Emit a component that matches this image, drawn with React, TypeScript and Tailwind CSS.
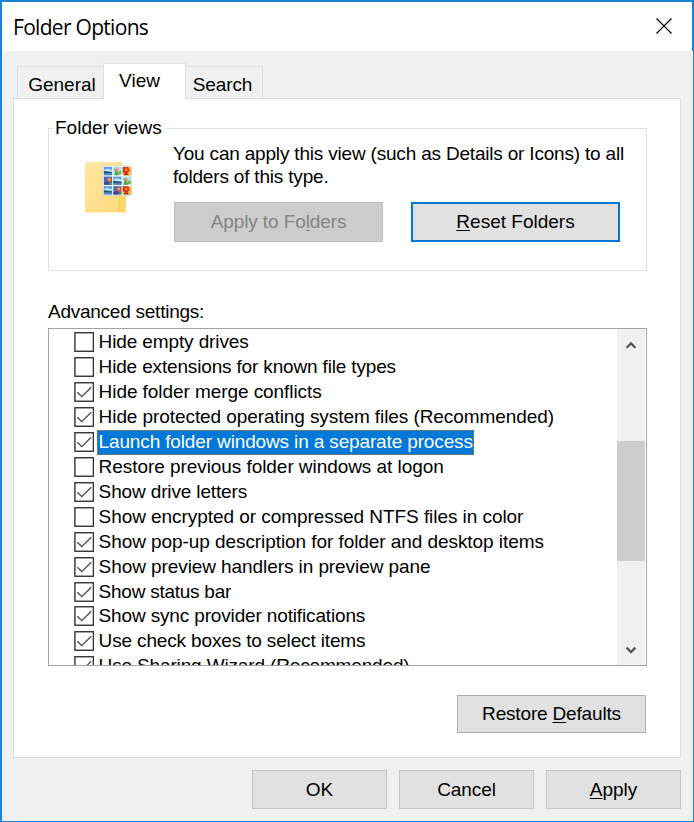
import type { ReactNode } from 'react'

interface Setting { label: string; checked: boolean; selected?: boolean; tracking: string }

const settings: Setting[] = [
  { label: 'Hide empty drives', checked: false, tracking: 'tracking-[-0.12px]' },
  { label: 'Hide extensions for known file types', checked: false, tracking: 'tracking-[-0.16px]' },
  { label: 'Hide folder merge conflicts', checked: true, tracking: 'tracking-[-0.07px]' },
  { label: 'Hide protected operating system files (Recommended)', checked: true, tracking: 'tracking-[-0.08px]' },
  { label: 'Launch folder windows in a separate process', checked: true, selected: true, tracking: 'tracking-[-0.14px]' },
  { label: 'Restore previous folder windows at logon', checked: false, tracking: 'tracking-[-0.06px]' },
  { label: 'Show drive letters', checked: true, tracking: 'tracking-[-0.14px]' },
  { label: 'Show encrypted or compressed NTFS files in color', checked: false, tracking: 'tracking-[-0.06px]' },
  { label: 'Show pop-up description for folder and desktop items', checked: true, tracking: 'tracking-[-0.07px]' },
  { label: 'Show preview handlers in preview pane', checked: true, tracking: 'tracking-[-0.08px]' },
  { label: 'Show status bar', checked: true, tracking: 'tracking-[-0.25px]' },
  { label: 'Show sync provider notifications', checked: true, tracking: 'tracking-[-0.15px]' },
  { label: 'Use check boxes to select items', checked: true, tracking: 'tracking-[-0.15px]' },
  { label: 'Use Sharing Wizard (Recommended)', checked: true, tracking: 'tracking-[-0.15px]' },
]

function Key({ children }: { children: ReactNode }) {
  return <span className="underline decoration-1 underline-offset-2">{children}</span>
}

function Button({ className, children }: { className: string; children: ReactNode }) {
  return (
    <button className={`flex shrink-0 items-center justify-center whitespace-nowrap ${className}`}>
      <span>{children}</span>
    </button>
  )
}

function CheckBox({ checked }: { checked: boolean }) {
  return (
    <svg className="block h-5 w-5 shrink-0" viewBox="0 0 20 20" fill="none">
      <rect x="0.9" y="0.75" width="18.5" height="18.5" fill="#fff" stroke="#333" strokeWidth="1.4" />
      {checked && <path d="M3.3 10.2 7.8 14.6 17.2 5.2" stroke="#4a4a4a" strokeWidth="1.3" />}
    </svg>
  )
}

function SettingRow({ item }: { item: Setting }) {
  return (
    <li className="flex h-[24.92px] items-center">
      <CheckBox checked={item.checked} />
      <span
        className={`ml-[3px] flex h-[25px] items-center whitespace-nowrap border border-dotted pl-[0.6px] ${item.tracking} ${
          item.selected ? 'border-[#c77a2a] bg-[#0078d7] text-white' : 'border-transparent'
        }`}
      >
        {item.label}
      </span>
    </li>
  )
}

/* Thumbnails on the folder: 0 = lake, 1 = butterfly, 2 = flower, 3 = tulip */
const thumbs = [0, 1, 2, 3, 0, 1, 0, 3, 2]

function Thumb({ kind }: { kind: number }) {
  if (kind === 0) {
    return (
      <>
        <rect width="8.2" height="8.2" fill="#5b9be6" />
        <path d="M0 3.2 3 1.6 8.2 3V4.6H0Z" fill="#c5e2fa" />
        <path d="M0 4 3.5 4.6 8.2 5.4V6.6L0 6.4Z" fill="#21546b" />
        <path d="M0 6.4H8.2V8.2H0Z" fill="#4b8bc0" />
      </>
    )
  }
  if (kind === 1) {
    return (
      <>
        <rect width="8.2" height="8.2" fill="#b6dcec" />
        <path d="M0.5 1 3.8 4 5.6 8.2H1L2 5Z" fill="#4da54a" />
        <path d="M2 2.2 4 0.8 5 3.6 3.4 5Z" fill="#ef8c35" />
        <path d="M4.6 5.2 7.6 3.4 8.2 7 5.4 7.6Z" fill="#6eb443" />
      </>
    )
  }
  if (kind === 2) {
    return (
      <>
        <rect width="8.2" height="8.2" fill="#f4b43d" />
        <path d="M0 0H5.6L7 3.8 4 6.6 0 5.4Z" fill="#d7351d" />
        <circle cx="3.6" cy="2.8" r="1.3" fill="#f58b23" />
        <path d="M1 7 4 5.6 6.4 8.2H1Z" fill="#b92c13" />
      </>
    )
  }
  return (
    <>
      <rect width="8.2" height="8.2" fill="#3c6fca" />
      <path d="M2.4 2.8 5 0.6 7.6 2.4 7 6 4.4 5.6Z" fill="#e8471f" />
      <circle cx="5.4" cy="2.8" r="1.3" fill="#f6c332" />
      <path d="M0.6 5.6 4.2 5 5.8 8.2H0Z" fill="#45408f" />
      <path d="M6.4 5.8H8.2V8.2H6Z" fill="#4f9d39" />
    </>
  )
}

function FolderIcon() {
  return (
    <svg className="block h-[52px] w-12" viewBox="0 0 48 52">
      <defs>
        <linearGradient id="folder" x1="0" y1="0" x2="1" y2="1">
          <stop offset="0" stopColor="#ffe9a6" />
          <stop offset="1" stopColor="#fdd978" />
        </linearGradient>
      </defs>
      <path d="M1 1Q1 0 2 0H37L38.3 1.5V33.5H41.7V49.5Q41.7 50.5 40.7 50.5H2Q1 50.5 1 49.5Z" fill="url(#folder)" />
      <path d="M35.3 33.5H41.7V49.5Q41.7 50.5 40.7 50.5H35Z" fill="#ffd869" />
      <path d="M35.2 33.5V50" stroke="#eccb6d" strokeWidth="0.7" />
      <rect x="19" y="4" width="28.6" height="29.4" fill="#f7f8fa" stroke="#d2d2d2" strokeWidth="0.8" />
      {thumbs.map((kind, i) => (
        <g key={i} transform={`translate(${19.9 + (i % 3) * 9.4} ${5 + Math.floor(i / 3) * 9.6})`}>
          <Thumb kind={kind} />
        </g>
      ))}
    </svg>
  )
}

function ScrollBar() {
  return (
    <div className="mr-px flex w-7 shrink-0 flex-col bg-[#f0f0f0] text-[#555]">
      <svg className="h-8 w-7 shrink-0" viewBox="0 0 28 32" fill="none" stroke="currentColor" strokeWidth="2.3">
        <path d="M9.6 18.8 14 14.4 18.4 18.8" />
      </svg>
      <div className="mt-20 h-[120px] bg-[#cdcdcd]" />
      <svg className="mt-auto h-8 w-7 shrink-0" viewBox="0 0 28 32" fill="none" stroke="currentColor" strokeWidth="2.3">
        <path d="M9.6 14.6 14 19 18.4 14.6" />
      </svg>
    </div>
  )
}

export default function App() {
  return (
    <div className="flex h-[822px] w-[694px] flex-col overflow-hidden border-t-2 border-b border-l-2 border-[#1883d7] bg-[#f0f0f0] font-['Liberation_Sans',Arial,sans-serif] text-[19px] leading-[22px] text-black">
      <header className="flex h-[49px] shrink-0 items-center justify-between border-r-2 border-[#1883d7] bg-white pr-5 pl-[11px]">
        <h1 className="font-['Open_Sans','Noto_Sans',sans-serif] text-[21px] leading-[28px] tracking-[-0.7px]">Folder Options</h1>
        <svg className="mb-px h-4 w-4" viewBox="0 0 16 16" stroke="#000" strokeWidth="1.2">
          <path d="M0.5 0.5 15.5 15.5M15.5 0.5 0.5 15.5" />
        </svg>
      </header>

      <main className="flex min-h-0 flex-1 flex-col border-r border-[#1883d7] pr-3 pl-[11px]">
        <nav className="mt-3 flex h-9 shrink-0 items-end pl-1">
          <div className="mb-px flex h-8 w-[87px] items-center justify-center border border-b-0 border-[#e0e0e0] pt-1 pl-[3px]">General</div>
          <div className="z-10 -ml-px flex h-9 w-[83px] justify-center border border-b-0 border-[#e0e0e0] bg-white pt-[6px] pr-[10px]">View</div>
          <div className="mb-px flex h-8 w-[77px] items-center justify-center border border-b-0 border-l-0 border-[#e0e0e0] pt-1 pr-[3px] tracking-[-0.1px]">Search</div>
        </nav>

        <section className="-mt-px flex h-[660px] w-[668px] shrink-0 flex-col border border-[#dfdfdf] bg-white pr-[33px] pl-[34px]">
          <fieldset className="mt-[17px] flex h-[155px] shrink-0 border border-[#e0e0e0] pl-[35px]">
            <legend className="-ml-[31px] px-[2px] leading-[24px]">Folder views</legend>
            <div className="mt-[22px] w-[90px] shrink-0"><FolderIcon /></div>
            <div>
              <p className="mt-[2px] -ml-px leading-[23px] tracking-[-0.19px] whitespace-nowrap">
                You can apply this view (such as Details or Icons) to all<br />folders of this type.
              </p>
              <div className="mt-[14px] flex gap-7">
                <Button className="h-10 w-[209px] border border-[#bfbfbf] bg-[#ccc] tracking-[-0.1px] text-[#838383]">Apply to Fo<Key>l</Key>ders</Button>
                <Button className="h-10 w-[209px] border-2 border-[#0078d7] bg-[#e1e1e1]"><Key>R</Key>eset Folders</Button>
              </div>
            </div>
          </fieldset>

          <h2 className="mt-[29px] leading-[24px] tracking-[-0.25px]">Advanced settings:</h2>
          <div className="mt-1 flex h-[338px] shrink-0 justify-between overflow-hidden border border-[#a0a3aa]">
            <ul className="mt-px h-[335px] overflow-hidden pl-[25px]">
              {settings.map(item => <SettingRow key={item.label} item={item} />)}
            </ul>
            <ScrollBar />
          </div>

          <Button className="mt-[29px] mr-px h-[38px] w-[189px] self-end border border-[#adadad] bg-[#e1e1e1] tracking-[-0.17px]">Restore <Key>D</Key>efaults</Button>
        </section>

        <footer className="mt-3 flex justify-end gap-3">
          <Button className="h-[39px] w-[135px] border border-[#c4c4c4] bg-[#e1e1e1]">OK</Button>
          <Button className="h-[39px] w-[135px] border border-[#c4c4c4] bg-[#e1e1e1] tracking-[-0.1px]">Cancel</Button>
          <Button className="h-[39px] w-[135px] border border-[#c4c4c4] bg-[#e1e1e1]"><Key>A</Key>pply</Button>
        </footer>
      </main>
    </div>
  )
}
